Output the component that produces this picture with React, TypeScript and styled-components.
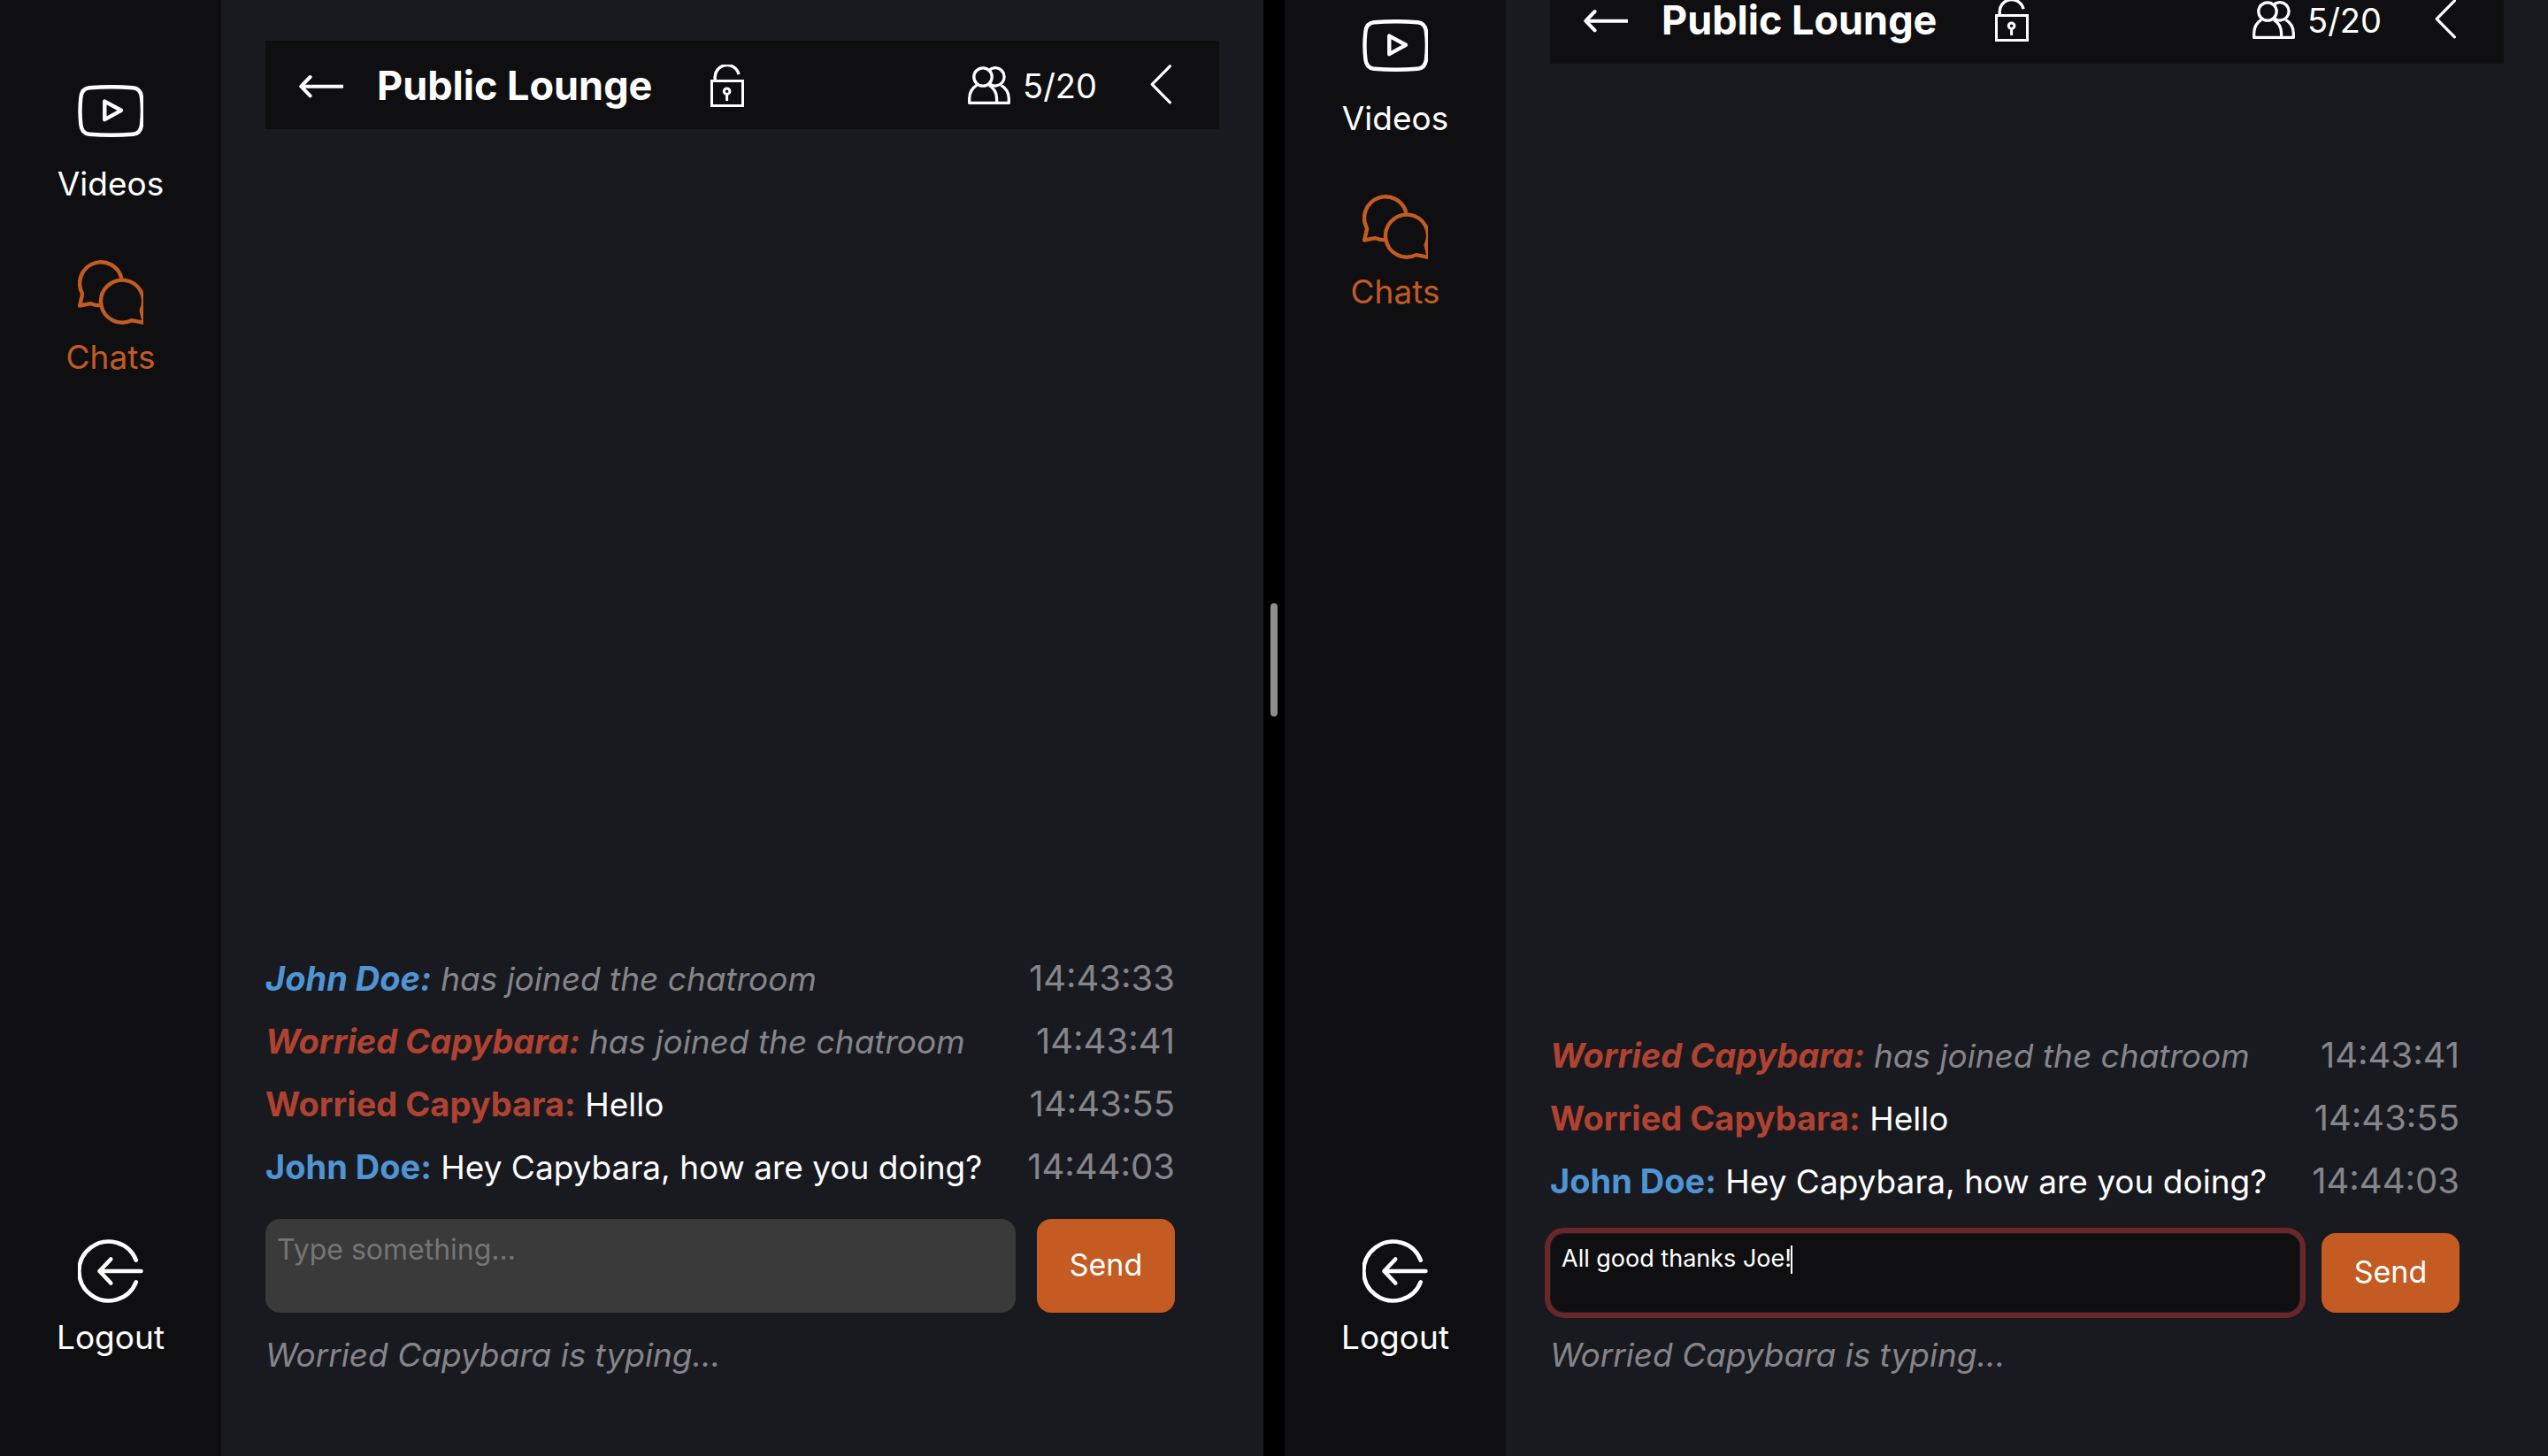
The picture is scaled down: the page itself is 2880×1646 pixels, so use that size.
import React from "react";
import styled, { createGlobalStyle } from "styled-components";

const colors = {
  page: "#191a1f",
  panel: "#0f0f11",
  accent: "#c35b22",
  muted: "#86858a",
  blue: "#4f94d4",
  red: "#b04232",
  field: "#3a3a3b",
  focus: "#6b2629",
};

const GlobalStyle = createGlobalStyle`
  *, *::before, *::after { box-sizing: border-box; }
  html, body, #root { height: 100%; }
  body {
    margin: 0;
    overflow: hidden;
    background: #000;
    color: #fff;
    font-family: Inter, "Liberation Sans", sans-serif;
    font-size: 37px;
    line-height: 48px;
  }
  button, textarea { font-family: inherit; color: inherit; }
`;

const Split = styled.div`
  display: flex;
  height: 100vh;
`;

const Divider = styled.div`
  display: flex;
  flex-direction: column;
  align-items: center;
  width: 24px;
  background: #000;
  &::before { content: ""; flex: 682; }
  &::after { content: ""; flex: 836; }
`;

const Handle = styled.div`
  width: 8px;
  height: 128px;
  border-radius: 4px;
  background: #8e8e8e;
`;

const Pane = styled.section`
  display: flex;
  flex: 1;
  min-width: 0;
  overflow: hidden;
  background: ${colors.page};
`;

const Sidebar = styled.aside`
  display: flex;
  flex-direction: column;
  justify-content: space-between;
  align-items: center;
  width: 250px;
  padding: 96px 0 110px;
  background: ${colors.panel};
`;

const Nav = styled.nav<{ $scroll: number }>`
  display: flex;
  flex-direction: column;
  gap: 60px;
  margin-top: ${(p) => -p.$scroll}px;
`;

const NavLink = styled.a<{ $active?: boolean }>`
  display: flex;
  flex-direction: column;
  align-items: center;
  gap: 12px;
  color: ${(p) => (p.$active ? colors.accent : "#fff")};
  text-decoration: none;
`;

const LogoutButton = styled.button`
  display: flex;
  flex-direction: column;
  align-items: center;
  gap: 12px;
  padding: 0;
  border: 0;
  background: none;
  font-size: 37px;
  line-height: 48px;
`;

const Column = styled.main<{ $scroll: number }>`
  display: flex;
  flex: 1;
  flex-direction: column;
  min-width: 0;
  height: calc(100% + ${(p) => p.$scroll}px);
  margin-top: ${(p) => -p.$scroll}px;
  padding: 46px 50px 90px;
`;

const Header = styled.header`
  display: flex;
  align-items: center;
  height: 100px;
  flex-shrink: 0;
  padding: 2px 54px 0 38px;
  background: ${colors.panel};
`;

const IconButton = styled.button`
  display: flex;
  padding: 0;
  border: 0;
  background: none;
`;

const Title = styled.h1`
  margin: 0 66px 0 38px;
  font-size: 45px;
  line-height: 44px;
  font-weight: 700;
`;

const Occupancy = styled.div`
  display: flex;
  align-items: center;
  gap: 14px;
  margin: 0 60px 0 auto;
  font-size: 38px;
  line-height: 44px;
`;

const Chat = styled.div`
  display: flex;
  flex: 1;
  flex-direction: column;
  justify-content: flex-end;
  gap: 24px;
  padding-right: 50px;
`;

const Messages = styled.ul`
  margin: 0;
  padding: 0;
  list-style: none;
`;

const Message = styled.li`
  display: flex;
  justify-content: space-between;
  align-items: baseline;
  height: 71px;
  line-height: 71px;
  white-space: nowrap;
`;

const Body = styled.span<{ $notice?: boolean }>`
  color: ${(p) => (p.$notice ? colors.muted : "#fff")};
  font-style: ${(p) => (p.$notice ? "italic" : "normal")};
`;

const Author = styled.b<{ $color: string }>`
  color: ${(p) => p.$color};
  font-size: 38px;
  font-weight: 700;
`;

const Time = styled.time`
  color: ${colors.muted};
  font-size: 40px;
`;

const Composer = styled.form<{ $focused?: boolean }>`
  display: flex;
  gap: 24px;
  height: ${(p) => (p.$focused ? 90 : 106)}px;
`;

const Field = styled.label`
  position: relative;
  display: flex;
  flex: 1;
  min-width: 0;
`;

const TextBox = styled.textarea<{ $focused?: boolean }>`
  flex: 1;
  min-width: 0;
  padding: 12px;
  border: 1px solid ${(p) => (p.$focused ? "#191e22" : colors.field)};
  border-radius: 16px;
  outline: ${(p) => (p.$focused ? `6px solid ${colors.focus}` : "none")};
  background: ${(p) => (p.$focused ? colors.panel : colors.field)};
  font-size: ${(p) => (p.$focused ? 27 : 32)}px;
  line-height: ${(p) => (p.$focused ? 32 : 44)}px;
  resize: none;
  overflow: hidden;
  &::placeholder { color: #757575; opacity: 1; }
`;

const Caret = styled.span`
  position: absolute;
  top: 14px;
  left: 272px;
  width: 2px;
  height: 32px;
  background: #fff;
`;

const Send = styled.button`
  width: 156px;
  padding: 0 0 4px;
  border: 0;
  border-radius: 16px;
  background: ${colors.accent};
  font-size: 34px;
`;

const Typing = styled.p`
  margin: 0;
  color: ${colors.muted};
  font-style: italic;
`;

const Icon = styled.svg`
  display: block;
  flex-shrink: 0;
  fill: none;
  stroke: currentColor;
`;

const VideoIcon = () => (
  <Icon width="74" height="76" viewBox="0 0 74 76" strokeWidth="4.4" strokeLinejoin="round">
    <path d="M13 3.2Q37.7 1.2 62.4 3.2Q71 4 72 14Q73.8 29.5 72 45Q71 55 62.4 55.8Q37.7 57.8 13 55.8Q4.4 55 3.4 45Q1.6 29.5 3.4 14Q4.4 4 13 3.2Z" />
    <path d="M30.3 18.6V39.2L49 28.8Z" />
  </Icon>
);

const ChatsIcon = () => (
  <Icon width="74" height="76" viewBox="0 -2 74 76" strokeWidth="4.4" strokeLinejoin="round">
    <path d="M49.5 21A24 24 0 1 0 4.6 37L5 39L2.2 51.5L14.5 49.2Q20 51.4 26 51.4" />
    <path d="M71.7 57A24 24 0 1 0 60.8 68.1L75 71Z" />
  </Icon>
);

const LogoutIcon = () => (
  <Icon width="74" height="76" viewBox="0 -1 74 76" strokeWidth="4.6" strokeLinecap="round" strokeLinejoin="round">
    <path d="M65.8 23.7A33.4 33.4 0 1 0 65.8 48.3" />
    <path d="M71.5 36H24.5M37.3 22.5L24.5 36L37.3 49.5" />
  </Icon>
);

const BackIcon = () => (
  <Icon width="50" height="32" viewBox="0 -3 50 32" strokeWidth="4" strokeLinejoin="round">
    <path d="M50 13.7H2" />
    <path d="M12.6 3L2.3 13.7L12.6 24.4" strokeLinecap="round" />
  </Icon>
);

const LockIcon = () => (
  <Icon width="38" height="48" viewBox="0 0 38 48" strokeWidth="3">
    <rect x="1.5" y="18.5" width="35" height="28" />
    <path d="M5.2 18V15.5A13.6 13.6 0 0 1 32 11.2" strokeWidth="3.4" />
    <circle cx="18.6" cy="30.2" r="3.3" />
    <path d="M18.6 33V41" />
  </Icon>
);

const PeopleIcon = () => (
  <Icon width="48" height="44" viewBox="0 0 48 44" strokeWidth="3.3" strokeLinejoin="round">
    <circle cx="17" cy="12" r="10.2" />
    <path d="M24.5 3.9A10.2 10.2 0 1 1 25 20.2" />
    <path d="M10 21.4Q1.7 26.5 1.7 36.5V41.4H46.3V36.5Q46.3 26.5 37.5 21.4" />
    <path d="M24 21.4Q32.6 26.5 32.6 36.5V41.4" />
  </Icon>
);

const ChevronIcon = () => (
  <Icon width="24" height="48" viewBox="0 0 24 48" strokeWidth="3.2" strokeLinecap="round" strokeLinejoin="round">
    <path d="M22.4 1.8L2.2 22.3L22.4 42.8" />
  </Icon>
);

interface Entry {
  author: string;
  color: string;
  text: string;
  time: string;
  notice?: boolean;
}

const entries: Entry[] = [
  { author: "John Doe", color: colors.blue, text: "has joined the chatroom", time: "14:43:33", notice: true },
  { author: "Worried Capybara", color: colors.red, text: "has joined the chatroom", time: "14:43:41", notice: true },
  { author: "Worried Capybara", color: colors.red, text: "Hello", time: "14:43:55" },
  { author: "John Doe", color: colors.blue, text: "Hey Capybara, how are you doing?", time: "14:44:03" },
];

interface ChatPaneProps {
  messages: Entry[];
  draft?: string;
  scroll?: number;
}

function ChatPane({ messages, draft = "", scroll = 0 }: ChatPaneProps) {
  const focused = draft !== "";
  return (
    <Pane>
      <Sidebar>
        <Nav $scroll={scroll}>
          <NavLink href="#videos">
            <VideoIcon />
            Videos
          </NavLink>
          <NavLink href="#chats" $active>
            <ChatsIcon />
            Chats
          </NavLink>
        </Nav>
        <LogoutButton type="button">
          <LogoutIcon />
          Logout
        </LogoutButton>
      </Sidebar>
      <Column $scroll={scroll}>
        <Header>
          <IconButton type="button" aria-label="Back">
            <BackIcon />
          </IconButton>
          <Title>Public Lounge</Title>
          <LockIcon />
          <Occupancy>
            <PeopleIcon />
            5/20
          </Occupancy>
          <IconButton type="button" aria-label="Show members">
            <ChevronIcon />
          </IconButton>
        </Header>
        <Chat>
          <Messages>
            {messages.map((m) => (
              <Message key={m.time}>
                <Body $notice={m.notice}>
                  <Author $color={m.color}>{m.author}:</Author> {m.text}
                </Body>
                <Time>{m.time}</Time>
              </Message>
            ))}
          </Messages>
          <Composer $focused={focused} onSubmit={(e) => e.preventDefault()}>
            <Field>
              <TextBox
                $focused={focused}
                aria-label="Message"
                placeholder="Type something..."
                defaultValue={draft}
                spellCheck={false}
              />
              {focused && <Caret />}
            </Field>
            <Send type="submit">Send</Send>
          </Composer>
          <Typing>Worried Capybara is typing...</Typing>
        </Chat>
      </Column>
    </Pane>
  );
}

export default function App() {
  return (
    <>
      <GlobalStyle />
      <Split>
        <ChatPane messages={entries} />
        <Divider>
          <Handle />
        </Divider>
        <ChatPane messages={entries.slice(1)} draft="All good thanks Joe!" scroll={74} />
      </Split>
    </>
  );
}
